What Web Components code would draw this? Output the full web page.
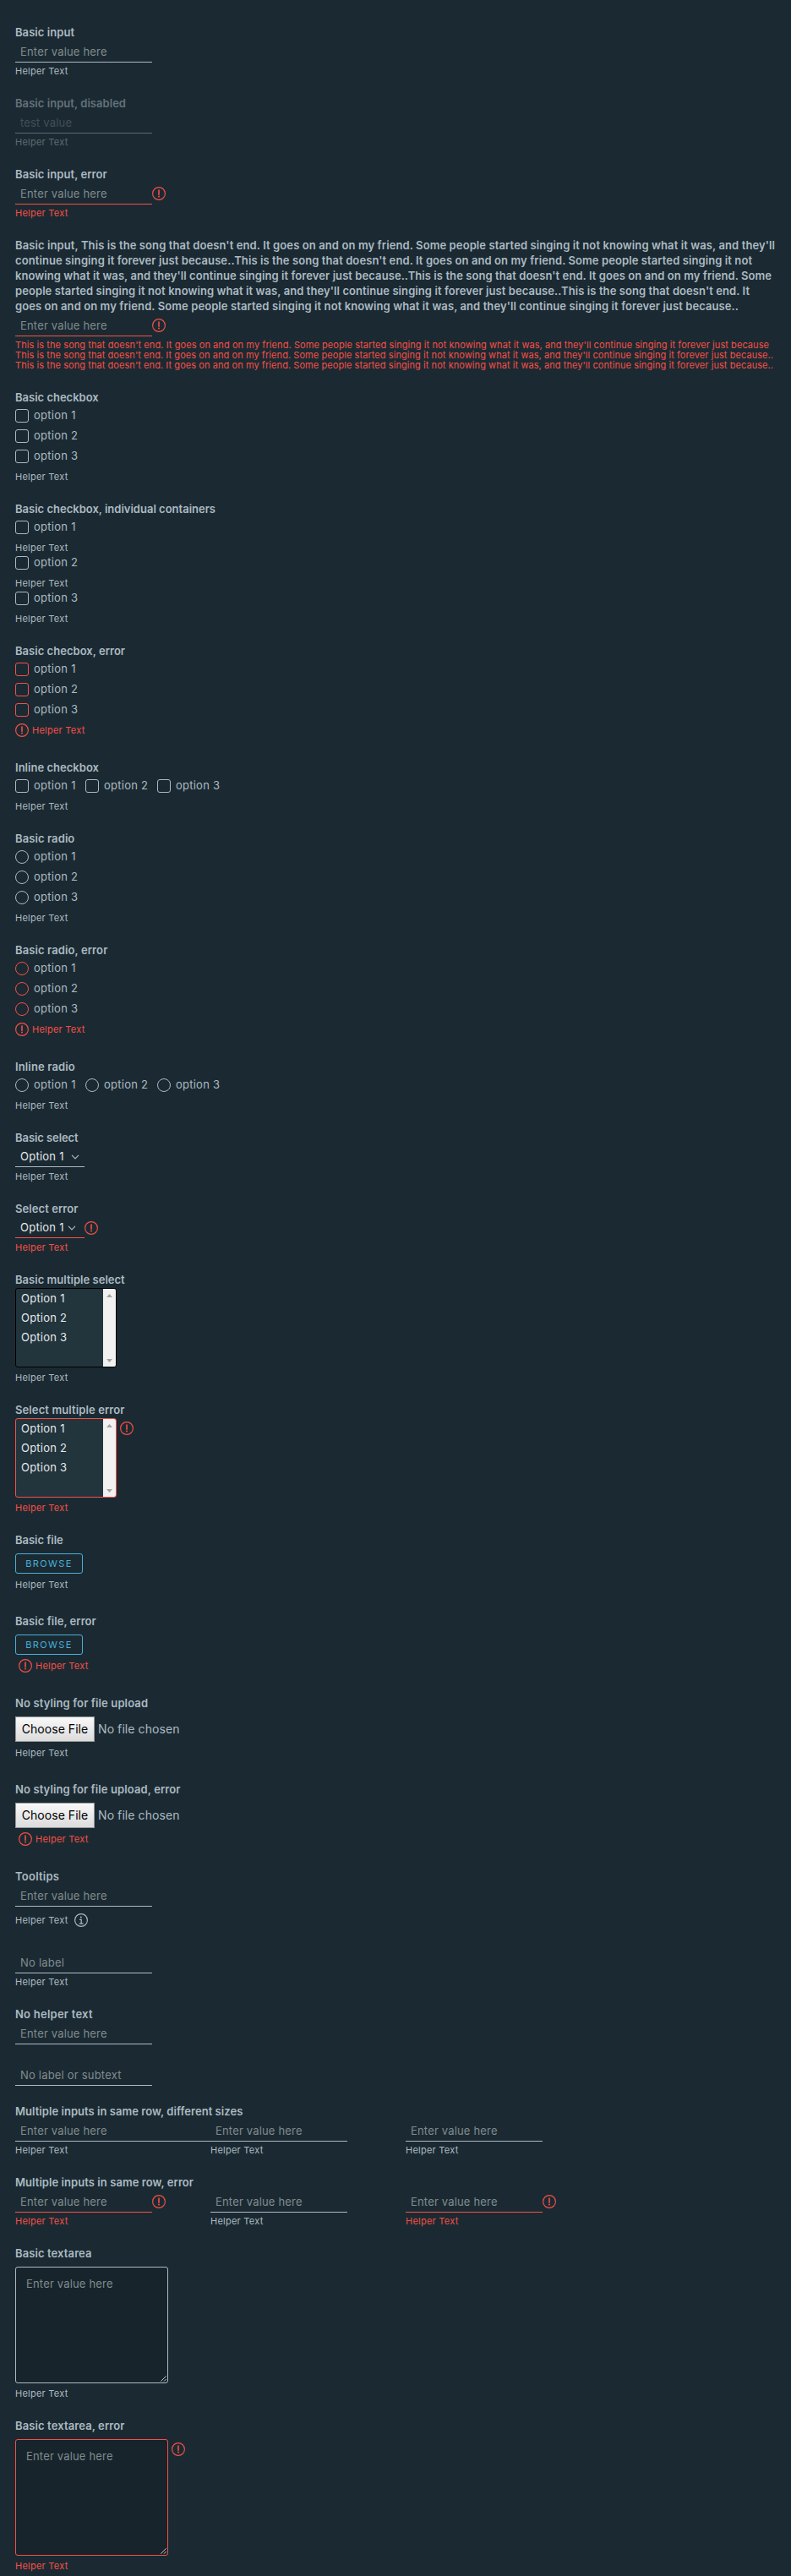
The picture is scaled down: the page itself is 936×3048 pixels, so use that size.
<!DOCTYPE html>
<html lang="en">
<head>
<meta charset="utf-8">
<title>Forms</title>
<style>
  html, body { margin: 0; background: #1b2a32; }
  body {
    font-family: Inter, "Noto Sans", sans-serif;
    font-size: 13px;
    color: #acbac3;
    --line: #acbac3;
    --error: #f54f47;
    --hint: #808b90;
    --value: #e2e8eb;
    --action: #49afd9;
  }
</style>
</head>
<body>
<forms-page></forms-page>
<script>
const define = (name, markup, setup) => customElements.define(name, class extends HTMLElement {
  connectedCallback() {
    if (this.shadowRoot) return;
    const root = this.attachShadow({ mode: 'open' });
    root.innerHTML = typeof markup === 'function' ? markup(this) : markup;
    if (setup) setup(this, root);
  }
});

/* One line of text whose tracking is adjusted to reach the width in "w". */
define('fit-text', `<style>:host{display:inline-block;white-space:nowrap;letter-spacing:0}</style><slot></slot>`, host => {
  const w = parseFloat(host.getAttribute('w'));
  if (!w) return;
  const n = host.textContent.length;
  const natural = host.getBoundingClientRect().width;
  host.style.letterSpacing = ((w + 1 - natural) / (n - 1)).toFixed(4) + 'px';
});

define('status-icon', host => `
  <style>
    :host{display:block;flex:none;width:16px;height:16px;color:var(--error)}
    :host([type="info"]){color:var(--line)}
    svg{display:block}
  </style>
  <svg width="16" height="16" viewBox="0 0 16 16" fill="none" stroke="currentColor">
    <circle cx="8" cy="8" r="7.4" stroke-width="1.15"/>
    ${host.getAttribute('type') === 'info'
      ? '<circle cx="7.8" cy="4.5" r="1" fill="currentColor" stroke="none"/><path d="M6 7.3h2.2v4.5M5.7 12h4.9" stroke-width="1.25"/>'
      : '<path d="M8 4v5.2" stroke-width="1.6" stroke-linecap="round"/><circle cx="8" cy="11.6" r="1" fill="currentColor" stroke="none"/>'}
  </svg>`);

define('field-label', `<style>:host{display:block;font-weight:600;line-height:18px;min-height:18px;margin-top:-1px;padding-bottom:1px}</style><slot></slot>`);

define('helper-text', host => `
  <style>
    :host{display:flex;align-items:center;font-size:11px;line-height:12px;min-height:12px;margin-top:6px;color:var(--line)}
    :host([tight]){margin-top:4px}
    :host([error]){color:var(--error)}
    :host([icon]){margin-top:0;height:24px;gap:4px}
    slot{display:block}
  </style>
  ${host.hasAttribute('icon') ? '<status-icon></status-icon>' : ''}
  <slot><fit-text w="61.3">Helper Text</fit-text></slot>`);

define('text-input', host => `
  <style>
    :host{display:flex;height:26px}
    .box{box-sizing:border-box;width:162px;height:26px;padding:4px 6px 0;line-height:18px;border-bottom:1px solid var(--line);color:var(--hint)}
    :host([wide]) .box{width:231px}
    :host([error]) .box{border-color:var(--error)}
    status-icon{margin-top:5px}
  </style>
  <div class="box"><slot><fit-text w="101.5">Enter value here</fit-text></slot></div>
  ${host.hasAttribute('error') ? '<status-icon></status-icon>' : ''}`);

define('choice-option', host => `
  <style>
    :host{display:flex;align-items:center;gap:6px;height:24px}
    i{box-sizing:border-box;width:16px;height:16px;border:1px solid var(--line);border-radius:3px}
    :host([radio]) i{border-radius:50%}
    :host([error]) i{border-color:var(--error)}
    span{line-height:18px;margin-top:-2px}
  </style>
  <i></i><span><fit-text w="${host.getAttribute('n') === '1' ? 48.5 : 51}">option ${host.getAttribute('n')}</fit-text></span>`);

define('choice-list', host => {
  const flags = (host.hasAttribute('radio') ? ' radio' : '') + (host.hasAttribute('error') ? ' error' : '');
  return `
  <style>
    :host{display:block}
    :host([inline]){display:grid;grid-template-columns:83px 85px 85px}
  </style>
  ${[1, 2, 3].map(n => `<choice-option n="${n}"${flags}></choice-option>${host.hasAttribute('split') ? '<helper-text></helper-text>' : ''}`).join('')}`;
});

define('select-box', host => `
  <style>
    :host{display:flex;height:25px;padding-bottom:1px}
    .box{box-sizing:border-box;display:flex;justify-content:space-between;width:82px;height:25px;padding:3px 6px 0;line-height:18px;border-bottom:1px solid var(--line);color:var(--value)}
    svg{margin:6px 0 0;flex:none}
    :host([error]) svg{margin-right:4px}
    :host([error]) .box{border-color:var(--error)}
    status-icon{margin-top:5px}
  </style>
  <div class="box"><fit-text w="50.5">Option 1</fit-text>
    <svg width="10" height="8" viewBox="0 0 10 8" fill="none" stroke="#acbac3" stroke-width="1.2"><path d="M1 1.8l4 4 4-4"/></svg></div>
  ${host.hasAttribute('error') ? '<status-icon></status-icon>' : ''}`);

define('multi-select', host => `
  <style>
    :host{display:flex;gap:4px}
    .box{box-sizing:border-box;display:flex;width:120px;height:94px;border:1px solid #000;border-radius:3px;overflow:hidden;background:#22343c;color:var(--value)}
    :host([error]) .box{border-color:var(--error)}
    .list{flex:1;padding-left:6px;line-height:23px}
    .list div{height:23px}
    .bar{display:flex;flex-direction:column;justify-content:space-between;align-items:center;width:15px;background:#f1f1f1;padding:6px 0 5px;box-sizing:border-box}
    status-icon{margin-top:4px}
  </style>
  <div class="box">
    <div class="list"><div><fit-text w="50.5">Option 1</fit-text></div><div><fit-text w="53">Option 2</fit-text></div><div><fit-text w="53">Option 3</fit-text></div></div>
    <div class="bar">
      <svg width="7" height="4" viewBox="0 0 7 4" fill="#a3a3a3"><path d="M0 4L3.5 0 7 4z"/></svg>
      <svg width="7" height="4" viewBox="0 0 7 4" fill="#a3a3a3"><path d="M0 0L3.5 4 7 0z"/></svg>
    </div>
  </div>
  ${host.hasAttribute('error') ? '<status-icon></status-icon>' : ''}`);

define('browse-button', `
  <style>
    :host{display:flex;align-items:center;justify-content:center;box-sizing:border-box;width:80px;height:24px;margin-top:6px;border:1px solid var(--action);border-radius:3px;color:var(--action);font-size:11px;line-height:16px}
  </style><fit-text w="53">BROWSE</fit-text>`);

define('file-chooser', `
  <style>
    :host{display:flex;align-items:center;gap:4px;margin-top:6px;font-size:14px;line-height:18px}
    b{box-sizing:border-box;display:flex;align-items:center;justify-content:center;width:94px;height:30px;font-weight:400;color:#000;border:1px solid #999;background:linear-gradient(#f8f8f8,#dcdcdc)}
  </style><b><fit-text w="77.5">Choose File</fit-text></b><fit-text w="95.5">No file chosen</fit-text>`);

define('text-area', host => `
  <style>
    :host{display:flex;gap:4px;margin-top:6px}
    .box{box-sizing:border-box;display:flex;flex-direction:column;align-items:flex-start;justify-content:space-between;width:181px;height:138px;padding:10px 0 0 12px;line-height:18px;border:1px solid var(--line);border-radius:3px;background:#17242b;color:var(--hint)}
    :host([error]) .box{border-color:var(--error)}
    svg{align-self:flex-end;margin:0 1px 1px 0}
    status-icon{margin-top:4px}
  </style>
  <div class="box"><fit-text w="101.5">Enter value here</fit-text>
    <svg width="7" height="7" viewBox="0 0 7 7" stroke="#d5dade" stroke-width=".9"><path d="M.3 6.7L6.7.3M4 6.7L6.7 4"/></svg></div>
  ${host.hasAttribute('error') ? '<status-icon></status-icon>' : ''}`);

define('form-group', host => `
  <style>
    :host{display:block;margin-bottom:24px}
    :host([disabled]){--line:#5d6a72;--hint:#424f57;color:#64717a}
  </style>
  ${host.getAttribute('label') ? `<field-label><fit-text w="${host.getAttribute('w')}">${host.getAttribute('label')}</fit-text></field-label>` : ''}
  <slot></slot>`);

define('input-row', `<style>:host{display:grid;grid-template-columns:231px 231px 231px}</style><slot></slot>`);

const line = (w, t) => `<fit-text w="${w}">${t}</fit-text><br>`;
const song = "This is the song that doesn't end. It goes on and on my friend. Some people started singing it not knowing what it was, and they'll continue singing it forever just because";

define('forms-page', `
  <style>
    :host{display:block;box-sizing:border-box;height:3048px;padding:30px 18px 0;overflow:hidden}
    .file{margin-bottom:29px}
    .file helper-text{margin-top:7px}
    .file helper-text[icon]{margin:1px 0 0 4px}
    .tip{display:flex;align-items:center;gap:7px;margin-top:8px;height:16px}
    .tip helper-text{margin-top:-1px}
  </style>
  <form-group label="Basic input" w="69"><text-input></text-input><helper-text tight></helper-text></form-group>
  <form-group disabled label="Basic input, disabled" w="130"><text-input><fit-text w="60">test value</fit-text></text-input><helper-text tight></helper-text></form-group>
  <form-group label="Basic input, error" w="107.7"><text-input error></text-input><helper-text tight error></helper-text></form-group>
  <form-group>
    <field-label>${line(898, "Basic input, This is the song that doesn't end. It goes on and on my friend. Some people started singing it not knowing what it was, and they'll")}${line(871, "continue singing it forever just because..This is the song that doesn't end. It goes on and on my friend. Some people started singing it not")}${line(894, "knowing what it was, and they'll continue singing it forever just because..This is the song that doesn't end. It goes on and on my friend. Some")}${line(868, "people started singing it not knowing what it was, and they'll continue singing it forever just because..This is the song that doesn't end. It")}${line(855, "goes on and on my friend. Some people started singing it not knowing what it was, and they'll continue singing it forever just because..")}</field-label>
    <text-input error></text-input>
    <helper-text tight error><div>${line(891, song)}${line(896, song + '..')}${line(896, song + '..')}</div></helper-text>
  </form-group>
  <form-group label="Basic checkbox" w="97.7"><choice-list></choice-list><helper-text></helper-text></form-group>
  <form-group label="Basic checkbox, individual containers" w="236"><choice-list split></choice-list></form-group>
  <form-group label="Basic checbox, error" w="129"><choice-list error></choice-list><helper-text icon error></helper-text></form-group>
  <form-group label="Inline checkbox" w="98"><choice-list inline></choice-list><helper-text></helper-text></form-group>
  <form-group label="Basic radio" w="69.3"><choice-list radio></choice-list><helper-text></helper-text></form-group>
  <form-group label="Basic radio, error" w="108.3"><choice-list radio error></choice-list><helper-text icon error></helper-text></form-group>
  <form-group label="Inline radio" w="69.7"><choice-list radio inline></choice-list><helper-text></helper-text></form-group>
  <form-group label="Basic select" w="73.7"><select-box></select-box><helper-text tight></helper-text></form-group>
  <form-group label="Select error" w="73.5"><select-box error></select-box><helper-text tight error></helper-text></form-group>
  <form-group label="Basic multiple select" w="128.7"><multi-select></multi-select><helper-text></helper-text></form-group>
  <form-group label="Select multiple error" w="128.5"><multi-select error></multi-select><helper-text error></helper-text></form-group>
  <form-group class="file" label="Basic file" w="55.7"><browse-button></browse-button><helper-text></helper-text></form-group>
  <form-group class="file" style="margin-bottom:24px" label="Basic file, error" w="94.7"><browse-button></browse-button><helper-text icon error></helper-text></form-group>
  <form-group class="file" label="No styling for file upload" w="156"><file-chooser></file-chooser><helper-text></helper-text></form-group>
  <form-group class="file" style="margin-bottom:24px" label="No styling for file upload, error" w="194.5"><file-chooser></file-chooser><helper-text icon error></helper-text></form-group>
  <form-group label="Tooltips" w="51" style="margin-bottom:29px"><text-input></text-input><div class="tip"><helper-text></helper-text><status-icon type="info"></status-icon></div></form-group>
  <form-group><text-input><fit-text w="51">No label</fit-text></text-input><helper-text tight></helper-text></form-group>
  <form-group label="No helper text" w="90.5" style="margin-bottom:23px"><text-input></text-input></form-group>
  <form-group style="margin-bottom:22px"><text-input><fit-text w="118.5">No label or subtext</fit-text></text-input></form-group>
  <form-group label="Multiple inputs in same row, different sizes" w="268.3">
    <input-row><text-input wide></text-input><text-input></text-input><text-input></text-input></input-row>
    <input-row><helper-text tight></helper-text><helper-text tight></helper-text><helper-text tight></helper-text></input-row>
  </form-group>
  <form-group label="Multiple inputs in same row, error" w="210">
    <input-row><text-input error></text-input><text-input></text-input><text-input error></text-input></input-row>
    <input-row><helper-text tight error></helper-text><helper-text tight></helper-text><helper-text tight error></helper-text></input-row>
  </form-group>
  <form-group label="Basic textarea" w="89.5"><text-area></text-area><helper-text></helper-text></form-group>
  <form-group label="Basic textarea, error" w="128.5"><text-area error></text-area><helper-text error></helper-text></form-group>
`);
</script>
</body>
</html>
